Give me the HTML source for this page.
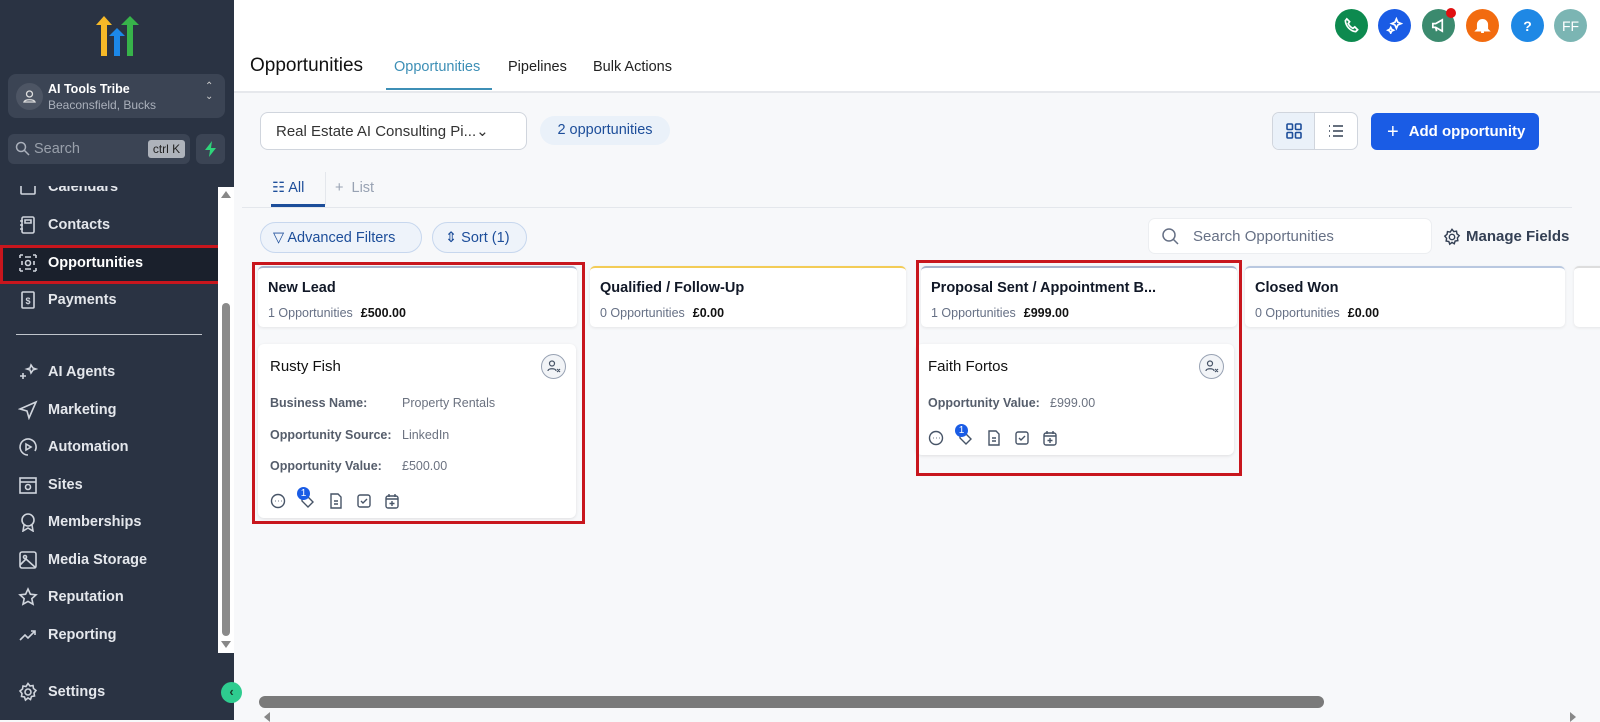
<!DOCTYPE html>
<html><head><meta charset="utf-8">
<style>
*{box-sizing:border-box;margin:0;padding:0}
body{width:1600px;height:720px;overflow:hidden;background:#f7f8fa;font-family:"Liberation Sans",sans-serif;position:relative;color:#111827}
.a{position:absolute}
#sb{left:0;top:0;width:234px;height:720px;background:#2a3343}
.nav{position:absolute;left:18px;color:#e4e7ec;font-size:14.5px;font-weight:bold;display:flex;align-items:center;gap:10px;height:20px}
.nav svg{width:20px;height:20px;stroke:#d0d5dd;fill:none;stroke-width:1.6}
.circ{position:absolute;top:9px;width:33px;height:33px;border-radius:50%;display:flex;align-items:center;justify-content:center;color:#fff;font-size:14px;font-weight:bold}
.circ svg{width:17px;height:17px;fill:none;stroke:#fff;stroke-width:1.8}
.pill{position:absolute;border:1px solid #c7d7ee;background:#eef3fa;border-radius:16px;color:#1d4e9a;font-size:14.5px;display:flex;align-items:center;gap:7px;padding-left:12px}
.colh{position:absolute;top:266px;height:61px;background:#fff;border-radius:5px;box-shadow:0 1px 3px rgba(0,0,0,.08);padding:12px 0 0 10px}
.colh b{display:block;font-size:14.5px;margin-bottom:8px}
.colh span{font-size:12.5px;color:#667085}
.colh i{font-style:normal;font-size:12.5px;color:#111;font-weight:bold;margin-left:8px}
.card{position:absolute;background:#fff;border-radius:6px;box-shadow:0 1px 3px rgba(0,0,0,.1)}
.card .nm{position:absolute;left:12px;top:14px;font-size:15px;color:#111}
.card .av{position:absolute;right:10px;top:10px;width:25px;height:25px;border:1px solid #98a2b3;border-radius:50%;background:#f2f4f7}
.fl{position:absolute;left:12px;font-size:12.5px;color:#555d6b;font-weight:bold}
.fv{position:absolute;font-size:12.5px;color:#6b7280}
.icons{position:absolute;left:12px;display:flex;gap:12px}
.icons svg{width:16px;height:16px;stroke:#475467;fill:none;stroke-width:1.4}
.red{position:absolute;border:3px solid #c8161d}
</style></head><body>
<div id="sb" class="a">
 <svg class="a" style="left:96px;top:16px" width="44" height="42" viewBox="0 0 44 42">
  <path d="M8 0 L16 9 H11 V40 H5 V9 H0Z" fill="#f6b928"/>
  <path d="M34 0 L43 9 H37 V40 H31 V9 H25Z" fill="#37b34a"/>
  <path d="M21 12 L29 20 H24 V40 H18 V20 H13Z" fill="#1c88e8"/>
 </svg>
 <div class="a" style="left:8px;top:74px;width:217px;height:44px;background:#3b4454;border-radius:8px"></div>
 <div class="a" style="left:16px;top:83px;width:27px;height:27px;border-radius:50%;background:#4d5564"></div>
 <svg class="a" style="left:22px;top:89px" width="15" height="15" viewBox="0 0 15 15" fill="none" stroke="#ddd" stroke-width="1.3"><circle cx="7.5" cy="5" r="3"/><path d="M2 13c1-3 10-3 11 0z"/></svg>
 <div class="a" style="left:48px;top:82px;color:#fff;font-size:12.5px;font-weight:bold">AI Tools Tribe</div>
 <div class="a" style="left:48px;top:98px;color:#aab0bb;font-size:12px">Beaconsfield, Bucks</div>
 <div class="a" style="left:205px;top:82px;color:#ccc;font-size:10px;line-height:10px">⌃<br>⌄</div>
 <div class="a" style="left:8px;top:134px;width:182px;height:30px;background:#3b4454;border-radius:6px"></div>
 <svg class="a" style="left:15px;top:141px" width="15" height="15" viewBox="0 0 15 15" fill="none" stroke="#aab0bb" stroke-width="1.5"><circle cx="6" cy="6" r="4.5"/><path d="M9.5 9.5L14 14"/></svg>
 <div class="a" style="left:34px;top:141px;color:#99a0ab;font-size:14.5px">Search</div>
 <div class="a" style="left:148px;top:140px;width:37px;height:18px;background:#aeb3bb;border-radius:3px;color:#222;font-size:12px;text-align:center;line-height:18px">ctrl K</div>
 <div class="a" style="left:196px;top:134px;width:29px;height:30px;background:#3b4454;border-radius:6px"></div>
 <svg class="a" style="left:203px;top:141px" width="15" height="16" viewBox="0 0 15 16"><path d="M9 0L2 9h5l-1 7 7-9H8z" fill="#2ed47a"/></svg>
 <div class="a" style="left:0;top:175px;width:218px;height:545px;overflow:hidden">
  <div class="nav" style="top:2px"><svg viewBox="0 0 20 20"><rect x="3" y="3" width="14" height="14" rx="1"/></svg>Calendars</div>
 </div>
 <div class="a" style="left:0;top:174px;width:234px;height:12px;background:#2a3343"></div>
 <div class="nav" style="top:215px"><svg viewBox="0 0 20 20"><rect x="4" y="2" width="12" height="16" rx="1.5"/><path d="M7 5h6v3H7zM2 6h3M2 10h3M2 14h3"/></svg>Contacts</div>
 <div class="a" style="left:0;top:245px;width:222px;height:39px;border:3px solid #c8161d;background:#1a202c"></div>
 <div class="nav" style="top:253px;color:#fff"><svg viewBox="0 0 20 20"><circle cx="10" cy="10" r="2.5"/><path d="M2 2h3M2 2v3M18 2h-3M18 2v3M2 18h3M2 18v-3M18 18h-3M18 18v-3M7 4h6M7 16h6M4 8v4M16 8v4"/></svg>Opportunities</div>
 <div class="nav" style="top:290px"><svg viewBox="0 0 20 20"><rect x="4" y="2" width="12" height="16" rx="1"/><text x="10" y="14" font-size="9" text-anchor="middle" fill="#d0d5dd" stroke="none">$</text></svg>Payments</div>
 <div class="a" style="left:16px;top:334px;width:186px;height:1px;background:#c0c5cc"></div>
 <div class="nav" style="top:362px"><svg viewBox="0 0 20 20"><path d="M5 11v6M2 14h6M13 3l2 3 3 1-3 1-2 3-1-3-3-1 3-1z"/></svg>AI Agents</div>
 <div class="nav" style="top:400px"><svg viewBox="0 0 20 20"><path d="M18 2L2 9l7 2 2 7z"/></svg>Marketing</div>
 <div class="nav" style="top:437px"><svg viewBox="0 0 20 20"><path d="M10 18a8 8 0 1 1 7-4"/><path d="M8 7l5 3-5 3z"/></svg>Automation</div>
 <div class="nav" style="top:475px"><svg viewBox="0 0 20 20"><rect x="2" y="3" width="16" height="15"/><path d="M2 7h16"/><circle cx="10" cy="12" r="2.5"/></svg>Sites</div>
 <div class="nav" style="top:512px"><svg viewBox="0 0 20 20"><circle cx="10" cy="8" r="6"/><path d="M6 13l-1 6 5-3 5 3-1-6"/></svg>Memberships</div>
 <div class="nav" style="top:550px"><svg viewBox="0 0 20 20"><rect x="2" y="2" width="16" height="16" rx="2"/><circle cx="7" cy="7" r="1.5"/><path d="M2 15l6-6 10 9"/></svg>Media Storage</div>
 <div class="nav" style="top:587px"><svg viewBox="0 0 20 20"><path d="M10 2l2.4 5.2 5.6.6-4.2 3.8 1.2 5.6L10 14.4 5 17.2l1.2-5.6L2 7.8l5.6-.6z"/></svg>Reputation</div>
 <div class="nav" style="top:625px"><svg viewBox="0 0 20 20"><path d="M2 15l5-5 3 3 7-7M13 6h4v4"/></svg>Reporting</div>
 <div class="nav" style="top:682px"><svg viewBox="0 0 20 20"><circle cx="10" cy="10" r="3"/><path d="M10 1.5l2 2.5 3-.5.5 3 2.5 2-2 2.5.5 3-3 .5-1 3-2.5-1.5L7.5 18l-1-3-3-.5.5-3-2-2.5 2.5-2 .5-3 3 .5z"/></svg>Settings</div>
 <div class="a" style="left:218px;top:187px;width:16px;height:466px;background:#fff"></div>
 <div class="a" style="left:221px;top:191px;width:0;height:0;border:5px solid transparent;border-bottom:7px solid #888;border-top:0"></div>
 <div class="a" style="left:222px;top:303px;width:8px;height:333px;background:#8a8a8a;border-radius:4px"></div>
 <div class="a" style="left:221px;top:641px;width:0;height:0;border:5px solid transparent;border-top:7px solid #888;border-bottom:0"></div>
</div>
<div class="a" style="left:221px;top:682px;width:21px;height:21px;border-radius:50%;background:#2ecc8f;color:#1a3a2a;font-size:13px;text-align:center;line-height:20px;font-weight:bold">‹</div>

<!-- header -->
<div class="a" style="left:234px;top:0;width:1366px;height:93px;background:#fff;border-bottom:2px solid #e6e8ec"></div>
<div class="a" style="left:250px;top:55px;font-size:19px;color:#111">Opportunities</div>
<div class="a" style="left:394px;top:59px;font-size:14.5px;color:#3d8fb6">Opportunities</div>
<div class="a" style="left:386px;top:88px;width:106px;height:2px;background:#3d8fb6"></div>
<div class="a" style="left:508px;top:59px;font-size:14.5px;color:#222">Pipelines</div>
<div class="a" style="left:593px;top:59px;font-size:14.5px;color:#222">Bulk Actions</div>
<div class="circ" style="left:1335px;background:#0d8a4f"><svg viewBox="0 0 18 18"><path d="M4 2l3 3-1.5 2c1 2 3 4 5 5L12.5 10.5l3 3-2 2C8 15 3 10 2.5 4z"/></svg></div>
<div class="circ" style="left:1378px;background:#1a5ce5"><svg viewBox="0 0 18 18"><path d="M11 2l1.5 3.5L16 7l-3.5 1.5L11 12 9.5 8.5 6 7l3.5-1.5zM5 11l1 2 2 1-2 1-1 2-1-2-2-1 2-1z"/></svg></div>
<div class="circ" style="left:1422px;background:#3b8a6e"><svg viewBox="0 0 18 18"><path d="M3 7h3l7-4v12l-7-4H3zM6 11l1 4"/></svg></div>
<div class="a" style="left:1446px;top:8px;width:10px;height:10px;border-radius:50%;background:#e01010"></div>
<div class="circ" style="left:1466px;background:#f26b0f"><svg viewBox="0 0 18 18"><path d="M4 13V8a5 5 0 0 1 10 0v5l1.5 1.5h-13zM7.5 16h3" fill="#fff"/></svg></div>
<div class="circ" style="left:1511px;background:#1e88e5">?</div>
<div class="circ" style="left:1554px;background:#7bb5b3;font-weight:normal">FF</div>

<!-- toolbar -->
<div class="a" style="left:260px;top:112px;width:267px;height:38px;background:#fff;border:1px solid #d0d5dd;border-radius:8px;font-size:15px;color:#333;padding:9px 0 0 15px">Real Estate AI Consulting Pi...⌄</div>
<div class="a" style="left:540px;top:116px;width:130px;height:29px;background:#eaf1f9;border-radius:15px;font-size:14.5px;color:#1d4e9a;text-align:center;line-height:29px">2 opportunities</div>
<div class="a" style="left:1272px;top:112px;width:86px;height:38px;background:#fff;border:1px solid #d0d5dd;border-radius:7px;overflow:hidden">
 <div style="position:absolute;left:0;top:0;width:42px;height:38px;background:#eaf1f9;border-right:1px solid #d0d5dd"></div>
 <svg style="position:absolute;left:13px;top:10px" width="16" height="16" viewBox="0 0 16 16" fill="none" stroke="#1d4e9a" stroke-width="1.6"><rect x="1" y="1" width="5.5" height="5.5" rx="1"/><rect x="9.5" y="1" width="5.5" height="5.5" rx="1"/><rect x="1" y="9.5" width="5.5" height="5.5" rx="1"/><rect x="9.5" y="9.5" width="5.5" height="5.5" rx="1"/></svg>
 <svg style="position:absolute;left:55px;top:10px" width="16" height="16" viewBox="0 0 16 16" fill="none" stroke="#344054" stroke-width="1.6"><path d="M5 3h10M5 8h10M5 13h10M1 3h1M1 8h1M1 13h1"/></svg>
</div>
<div class="a" style="left:1371px;top:113px;width:168px;height:37px;background:#1a5ce5;border-radius:6px;color:#fff;font-size:15px;font-weight:bold;line-height:37px;padding-left:16px"><span style="font-weight:normal;font-size:20px;vertical-align:-2px;margin-right:10px">+</span>Add opportunity</div>

<div class="a" style="left:272px;top:180px;font-size:14.5px;color:#1d4e9a">☷ All</div>
<div class="a" style="left:271px;top:204px;width:54px;height:3px;background:#1d4e9a"></div>
<div class="a" style="left:325px;top:172px;width:1px;height:33px;background:#e4e7ec"></div>
<div class="a" style="left:335px;top:180px;font-size:14.5px;color:#98a2b3">+ &nbsp;List</div>
<div class="a" style="left:242px;top:207px;width:1330px;height:1px;background:#e4e7ec"></div>

<div class="pill" style="left:260px;top:222px;width:162px;height:31px">▽ Advanced Filters</div>
<div class="pill" style="left:432px;top:222px;width:95px;height:31px">⇕ Sort (1)</div>
<div class="a" style="left:1148px;top:218px;width:284px;height:36px;background:#fff;border:1px solid #eceef1;border-radius:7px"></div>
<svg class="a" style="left:1161px;top:227px" width="18" height="18" viewBox="0 0 18 18" fill="none" stroke="#667085" stroke-width="1.5"><circle cx="8" cy="8" r="6"/><path d="M12.5 12.5L17 17"/></svg>
<div class="a" style="left:1193px;top:228px;font-size:15px;color:#667085">Search Opportunities</div>
<svg class="a" style="left:1443px;top:228px" width="18" height="18" viewBox="0 0 20 20" fill="none" stroke="#344054" stroke-width="1.6"><circle cx="10" cy="10" r="3"/><path d="M10 1.5l2 2.5 3-.5.5 3 2.5 2-2 2.5.5 3-3 .5-1 3-2.5-1.5L7.5 18l-1-3-3-.5.5-3-2-2.5 2.5-2 .5-3 3 .5z"/></svg>
<div class="a" style="left:1466px;top:228px;font-size:15px;color:#344054;font-weight:bold">Manage Fields</div>

<!-- columns -->
<div class="colh" style="left:258px;width:319px;border-top:2px solid #a8b4cc"><b>New Lead</b><span>1 Opportunities</span><i>£500.00</i></div>
<div class="colh" style="left:590px;width:316px;border-top:2px solid #f3cc56"><b>Qualified / Follow-Up</b><span>0 Opportunities</span><i>£0.00</i></div>
<div class="colh" style="left:921px;width:316px;border-top:2px solid #a8b4cc"><b>Proposal Sent / Appointment B...</b><span>1 Opportunities</span><i>£999.00</i></div>
<div class="colh" style="left:1245px;width:320px;border-top:2px solid #b9c8e0"><b>Closed Won</b><span>0 Opportunities</span><i>£0.00</i></div>
<div class="colh" style="left:1574px;width:40px;border-top:2px solid #ddd"></div>

<div class="card" style="left:258px;top:344px;width:318px;height:174px">
 <div class="nm">Rusty Fish</div><div class="av"><svg width="23" height="23" viewBox="0 0 23 23" fill="none" stroke="#475467" stroke-width="1.2"><circle cx="10" cy="8.5" r="2.5"/><path d="M6 16c0-3 8-3 8 0M15 14l3 3M18 14l-3 3"/></svg></div>
 <div class="fl" style="top:52px">Business Name:</div><div class="fv" style="left:144px;top:52px">Property Rentals</div>
 <div class="fl" style="top:84px">Opportunity Source:</div><div class="fv" style="left:144px;top:84px">LinkedIn</div>
 <div class="fl" style="top:115px">Opportunity Value:</div><div class="fv" style="left:144px;top:115px">£500.00</div>
 <div class="icons" style="top:149px">
  <svg viewBox="0 0 16 16"><circle cx="8" cy="8" r="6.5"/><path d="M5 8h.5M8 8h.5M11 8h.5"/></svg>
  <svg viewBox="0 0 16 16" style="margin-left:2px"><path d="M8 14L2 8V3h5l6 6z"/></svg>
  <svg viewBox="0 0 16 16"><path d="M3 1h7l3 3v11H3z M6 8h4M6 11h4"/></svg>
  <svg viewBox="0 0 16 16"><rect x="2" y="2" width="12" height="12" rx="2"/><path d="M5 8l2 2 4-4"/></svg>
  <svg viewBox="0 0 16 16"><rect x="2" y="3" width="12" height="12" rx="2"/><path d="M5 1v3M11 1v3M2 6h12M8 8v5M5.5 10.5h5"/></svg>
 </div>
 <div class="a" style="left:39px;top:143px;width:13px;height:13px;border-radius:50%;background:#1a5ce5;color:#fff;font-size:10px;text-align:center;line-height:13px">1</div>
</div>
<div class="red" style="left:252px;top:262px;width:333px;height:262px"></div>

<div class="card" style="left:916px;top:344px;width:318px;height:111px">
 <div class="nm">Faith Fortos</div><div class="av"><svg width="23" height="23" viewBox="0 0 23 23" fill="none" stroke="#475467" stroke-width="1.2"><circle cx="10" cy="8.5" r="2.5"/><path d="M6 16c0-3 8-3 8 0M15 14l3 3M18 14l-3 3"/></svg></div>
 <div class="fl" style="top:52px">Opportunity Value:</div><div class="fv" style="left:134px;top:52px">£999.00</div>
 <div class="icons" style="top:86px">
  <svg viewBox="0 0 16 16"><circle cx="8" cy="8" r="6.5"/><path d="M5 8h.5M8 8h.5M11 8h.5"/></svg>
  <svg viewBox="0 0 16 16" style="margin-left:2px"><path d="M8 14L2 8V3h5l6 6z"/></svg>
  <svg viewBox="0 0 16 16"><path d="M3 1h7l3 3v11H3z M6 8h4M6 11h4"/></svg>
  <svg viewBox="0 0 16 16"><rect x="2" y="2" width="12" height="12" rx="2"/><path d="M5 8l2 2 4-4"/></svg>
  <svg viewBox="0 0 16 16"><rect x="2" y="3" width="12" height="12" rx="2"/><path d="M5 1v3M11 1v3M2 6h12M8 8v5M5.5 10.5h5"/></svg>
 </div>
 <div class="a" style="left:39px;top:80px;width:13px;height:13px;border-radius:50%;background:#1a5ce5;color:#fff;font-size:10px;text-align:center;line-height:13px">1</div>
</div>
<div class="red" style="left:916px;top:260px;width:326px;height:216px"></div>

<div class="a" style="left:259px;top:696px;width:1065px;height:12px;background:#7a7a7a;border-radius:6px"></div>
<div class="a" style="left:264px;top:712px;width:0;height:0;border:5px solid transparent;border-right:6px solid #888;border-left:0"></div>
<div class="a" style="left:1570px;top:712px;width:0;height:0;border:5px solid transparent;border-left:6px solid #888;border-right:0"></div>
</body></html>
